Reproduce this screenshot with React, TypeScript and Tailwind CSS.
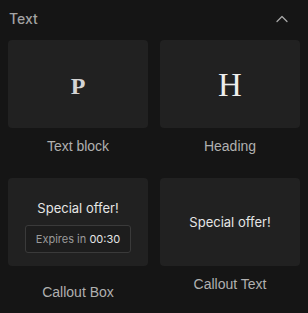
import React from 'react';
import { ChevronUp } from 'lucide-react';

export default function App() {
  return (
    <div className="w-[308px] h-[313px] bg-[#151515] overflow-hidden font-['Inter',sans-serif]">
      {/* Section header */}
      <div className="h-[38px] flex items-center justify-between pl-[9px] pr-[18px]">
        <span className="text-[14px] leading-5 font-medium text-[#a3a3a3]">Text</span>
        <ChevronUp size={20} strokeWidth={1.5} className="text-[#a8a8a8] -mr-[2px]" />
      </div>

      <div className="mt-[2px] px-2 grid grid-cols-2 gap-x-3 gap-y-[22px]">
        {/* Text block */}
        <div className="flex flex-col items-center">
          <div className="w-full h-[88px] rounded-[4px] bg-[#212121] flex items-center justify-center">
            <span className="font-['Liberation_Serif',serif] text-[24px] leading-none text-[#d4d4d4] font-bold mt-[3px]">P</span>
          </div>
          <span className="mt-2 text-[14px] leading-5 text-[#b0b0b0] font-['Liberation_Sans',sans-serif]">Text block</span>
        </div>

        {/* Heading */}
        <div className="flex flex-col items-center">
          <div className="w-full h-[88px] rounded-[4px] bg-[#212121] flex items-center justify-center">
            <span className="font-['Liberation_Serif',serif] text-[33px] leading-none text-[#ededed] mt-[3px]">H</span>
          </div>
          <span className="mt-2 text-[14px] leading-5 text-[#b0b0b0] font-['Liberation_Sans',sans-serif]">Heading</span>
        </div>

        {/* Callout box */}
        <div className="flex flex-col items-center">
          <div className="w-full h-[88px] rounded-[4px] bg-[#212121] flex flex-col items-center pt-5 gap-[7px]">
            <span className="text-[13px] leading-5 text-[#e5e5e5]">Special offer!</span>
            <div className="h-[28px] px-[10px] flex items-center rounded-[3px] border border-[#3a3a3a] bg-[#1d1d1d] text-[11px] leading-none">
              <span className="text-[#9a9a9a]">Expires in&nbsp;</span>
              <span className="text-[#e5e5e5]">00:30</span>
            </div>
          </div>
          <span className="mt-4 text-[14px] leading-5 text-[#b0b0b0] font-['Liberation_Sans',sans-serif]">Callout Box</span>
        </div>

        {/* Callout text */}
        <div className="flex flex-col items-center">
          <div className="w-full h-[88px] rounded-[4px] bg-[#212121] flex items-center justify-center">
            <span className="text-[13px] leading-5 text-[#e5e5e5]">Special offer!</span>
          </div>
          <span className="mt-2 text-[14px] leading-5 text-[#b0b0b0] font-['Liberation_Sans',sans-serif]">Callout Text</span>
        </div>
      </div>
    </div>
  );
}
